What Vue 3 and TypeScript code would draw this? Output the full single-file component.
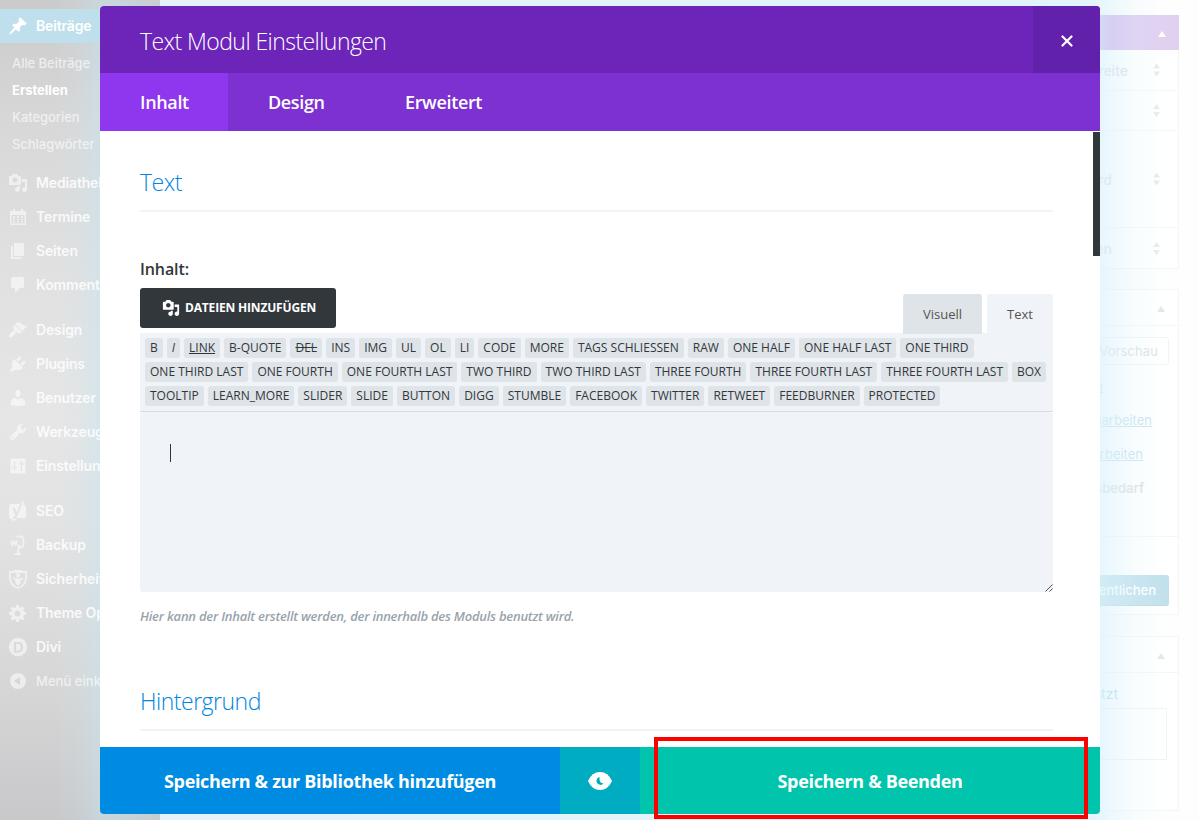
<script setup lang="ts">
interface MenuItem { icon: string; label: string; gap?: boolean; light?: boolean }

const submenu = ['Alle Beiträge', 'Erstellen', 'Kategorien', 'Schlagwörter']

const menu: MenuItem[] = [
  { icon: 'media', label: 'Mediathek' },
  { icon: 'calendar', label: 'Termine' },
  { icon: 'pages', label: 'Seiten' },
  { icon: 'comment', label: 'Kommentare' },
  { icon: 'brush', label: 'Design', gap: true },
  { icon: 'plug', label: 'Plugins' },
  { icon: 'user', label: 'Benutzer' },
  { icon: 'wrench', label: 'Werkzeuge' },
  { icon: 'sliders', label: 'Einstellungen' },
  { icon: 'yoast', label: 'SEO', gap: true },
  { icon: 'backup', label: 'Backup' },
  { icon: 'shield', label: 'Sicherheit' },
  { icon: 'gear', label: 'Theme Optionen' },
  { icon: 'divi', label: 'Divi' },
  { icon: 'collapse', label: 'Menü einklappen', light: true },
]

const tagRows: string[][] = [
  ['B', 'I', 'LINK', 'B-QUOTE', 'DEL', 'INS', 'IMG', 'UL', 'OL', 'LI', 'CODE', 'MORE', 'TAGS SCHLIESSEN', 'RAW', 'ONE HALF', 'ONE HALF LAST', 'ONE THIRD'],
  ['ONE THIRD LAST', 'ONE FOURTH', 'ONE FOURTH LAST', 'TWO THIRD', 'TWO THIRD LAST', 'THREE FOURTH', 'THREE FOURTH LAST', 'THREE FOURTH LAST', 'BOX'],
  ['TOOLTIP', 'LEARN_MORE', 'SLIDER', 'SLIDE', 'BUTTON', 'DIGG', 'STUMBLE', 'FACEBOOK', 'TWITTER', 'RETWEET', 'FEEDBURNER', 'PROTECTED'],
]

const tagClass = (t: string): string =>
  ({ I: 'italic', LINK: 'link', DEL: 'del' } as Record<string, string>)[t] ?? ''
</script>

<template>
  <div class="page">
    <aside class="sidebar">
      <div class="current">
        <svg class="ico" viewBox="0 0 20 20"><path d="M10.44 3.02l1.82-1.82 6.36 6.35-1.83 1.82c-1.05-.68-2.48-.57-3.41.36l-.75.75c-.92.93-1.04 2.35-.35 3.41l-1.83 1.82-2.41-2.41-2.8 2.79c-.42.42-3.38 2.71-3.8 2.29s1.86-3.39 2.28-3.81l2.79-2.79L4.1 9.36l1.83-1.82c1.05.69 2.48.57 3.4-.36l.75-.75c.93-.92 1.05-2.35.36-3.41z" /></svg>
        <span>Beiträge</span>
      </div>
      <ul class="sub">
        <li v-for="s in submenu" :key="s" :class="{ on: s === 'Erstellen' }">{{ s }}</li>
      </ul>
      <div v-for="m in menu" :key="m.label" class="item" :class="{ gap: m.gap, light: m.light }">
        <svg class="ico" viewBox="0 0 20 20">
          <path v-if="m.icon === 'media'" fill-rule="evenodd" d="M13 11V4c0-.55-.45-1-1-1h-1.67L9 1H5L3.670 3H2c-.55 0-1 .45-1 1v7c0 .55.45 1 1 1h10c.55 0 1-.45 1-1zM7 4.500c1.380 0 2.500 1.120 2.500 2.500S8.380 9.500 7 9.500 4.500 8.380 4.500 7 5.620 4.500 7 4.500zM14 6h5v10.500c0 1.380-1.120 2.500-2.500 2.500S14 17.880 14 16.500s1.120-2.500 2.500-2.500c.17 0 .34.020.500.050V9h-3V6zM10 14.050V13h2v3.500c0 1.380-1.120 2.500-2.500 2.500S7 17.880 7 16.500 8.120 14 9.500 14c.17 0 .34.020.500.050z" />
          <path v-else-if="m.icon === 'calendar'" fill-rule="evenodd" d="M2 4h3V2h2v2h6V2h2v2h3v14H2zM3.500 8v8.500h13V8zM5 9h2v2H5zm4 0h2v2H9zm4 0h2v2h-2zM5 11.700h2v1.600H5zm4 0h2v1.600H9zm4 0h2v1.600h-2zM5 14h2v1.600H5zm4 0h2v1.600H9zm4 0h2v1.600h-2z" />
          <path v-else-if="m.icon === 'pages'" d="M6 15V2h10v13H6zm-1 1h8v2H3V5h2v11z" />
          <path v-else-if="m.icon === 'comment'" d="M5 2h9q.820 0 1.410.59T16 4v7q0 .820-.590 1.410T14 13h-2l-5 5v-5H5q-.820 0-1.410-.590T3 11V4q0-.820.590-1.410T5 2z" />
          <path v-else-if="m.icon === 'brush'" d="M14.480 11.060L7.410 3.990l1.500-1.500c.5-.56 2.300-.470 3.510.320 1.210.8 1.430 1.280 2.910 2.100 1.180.640 2.450 1.260 4.450.850zM13.770 11.760L6.700 4.700 4.930 6.470c-.390.390-.390 1.020 0 1.410l1.060 1.060c.390.390.390 1.030 0 1.420-.6.600-1.430 1.110-2.210 1.690-.350.260-.7.530-1.010.840C1.430 14.230.4 16.080 1.400 17.070c.990 1 2.840-.030 4.180-1.360.310-.310.580-.660.850-1.020.570-.780 1.080-1.610 1.690-2.210.390-.390 1.020-.390 1.410 0l1.060 1.060c.390.390 1.020.390 1.410 0z" />
          <path v-else-if="m.icon === 'plug'" d="M13.110 4.360L9.870 7.600 8 5.730l3.240-3.240c.350-.340 1.050-.2 1.560.320.520.510.660 1.210.310 1.550zm-8 1.770l.910-1.120 9.010 9.010-1.190.840c-.710.710-2.630 1.160-3.820 1.160H6.140L4.900 17.260c-.590.590-1.540.590-2.120 0-.590-.580-.590-1.530 0-2.120L4 13.900v-3.880c0-1.180.4-3.180 1.110-3.890zm7.260 3.970l3.240-3.240c.340-.350 1.040-.210 1.550.310.520.510.660 1.210.310 1.550l-3.240 3.250z" />
          <path v-else-if="m.icon === 'user'" d="M10 9.250c-2.270 0-2.730-3.440-2.730-3.440C7 4.020 7.820 2 9.970 2c2.160 0 2.980 2.020 2.710 3.810 0 0-.410 3.440-2.680 3.440zm0 2.570L12.720 10c2.390 0 4.520 2.330 4.520 4.530v2.490s-3.650 1.130-7.240 1.130c-3.650 0-7.240-1.130-7.240-1.130v-2.490c0-2.250 1.940-4.480 4.470-4.480z" />
          <path v-else-if="m.icon === 'wrench'" d="M16.680 9.770c-1.340 1.340-3.300 1.670-4.950.990l-5.410 6.520c-.990.990-2.590.990-3.580 0s-.990-2.590 0-3.570l6.520-5.420c-.680-1.650-.350-3.610.990-4.950 1.280-1.280 3.120-1.620 4.720-1.060l-2.890 2.890 2.820 2.820 2.860-2.870c.530 1.580.180 3.390-1.080 4.650zM3.810 16.210c.4.390 1.040.390 1.430 0 .4-.4.400-1.040 0-1.430-.390-.4-1.030-.4-1.430 0-.390.390-.390 1.030 0 1.430z" />
          <path v-else-if="m.icon === 'sliders'" fill-rule="evenodd" d="M3.500 2.500h13q1 0 1 1v13q0 1-1 1h-13q-1 0-1-1v-13q0-1 1-1zM6 5v6H4.200v1.300H6V15h1.200v-2.700H9V11H7.200V5zm6.800 0v2.200H11v1.300h1.800V15H14V8.500h1.800V7.200H14V5z" />
          <path v-else-if="m.icon === 'yoast'" fill-rule="evenodd" d="M4 3h9l1.500-3h2L15 3.500q3 .2 3 3V17H9q-1.500 3-5 3v-2H4q-3 0-3-3V6q0-3 3-3zm.5 4l2.700 7q-.5 2.200-2.200 2.200V18c3 0 4-2 5-5l5-12h-2L9 11.500 7 7z" />
          <g v-else-if="m.icon === 'backup'" class="line"><path d="M3 5.500l1.200 4.500L6 6.500 7.800 10 9 5.500M9 2.500q0-1.200 2.500-1.200 4 0 4 3.500v4.500q0 3.200-3 3.200-2.500-.5-1.500-3M11 12.500L9.500 19M6.500 19.200H13" /></g>
          <path v-else-if="m.icon === 'shield'" fill-rule="evenodd" d="M1 2h5V1h8v1h5v6q0 9-9 12Q1 17 1 8zm1.700 2v4q0 7.500 7.300 10.200Q17.300 15.500 17.300 8V4zM10 4.500a2 2 0 0 1 0 4 2 2 0 0 1 0-4zM5 8.500l3 .7h4l3-.7v1.500l-2.500 1V14L10 17l-2.500-3v-3L5 10z" />
          <path v-else-if="m.icon === 'gear'" fill-rule="evenodd" d="M18 12h-2.180c-.170.700-.440 1.350-.810 1.930l1.540 1.540-2.100 2.100-1.540-1.540c-.580.360-1.230.630-1.910.790V19H8v-2.180c-.680-.160-1.330-.430-1.910-.790l-1.540 1.540-2.120-2.120 1.540-1.540c-.360-.580-.630-1.230-.790-1.910H1V9.030h2.170c.160-.7.440-1.350.8-1.940L2.430 5.550l2.100-2.100 1.540 1.540c.580-.370 1.240-.640 1.930-.810V2h3v2.180c.680.160 1.330.430 1.910.790l1.540-1.540 2.120 2.120-1.540 1.540c.360.590.640 1.240.8 1.940H18V12zm-8.500 1.500c1.660 0 3-1.340 3-3s-1.340-3-3-3-3 1.340-3 3 1.340 3 3 3z" />
          <path v-else-if="m.icon === 'divi'" fill-rule="evenodd" d="M10 .8a9.200 9.200 0 1 1 0 18.400A9.200 9.200 0 0 1 10 .8zM6 5v10.500h3.500q5.500 0 5.500-5.300T9.500 5zm2 1.800h1.500q3.400 0 3.400 3.400t-3.400 3.500H8z" />
          <path v-else fill-rule="evenodd" d="M10 2a8 8 0 1 1 0 16 8 8 0 0 1 0-16zm2 4l-6 4 6 4z" />
        </svg>
        <span>{{ m.label }}</span>
      </div>
    </aside>

    <div class="side">
      <section class="panel divi">
        <header class="violet"><i class="up"></i></header>
        <div class="row r1"><span>Breite</span><i class="sort"></i></div>
        <div class="row r2"><i class="sort"></i></div>
        <div class="row r3"><span>Standard</span><i class="sort"></i></div>
        <div class="row r4"><span>Aktivieren</span><i class="sort"></i></div>
      </section>
      <section class="panel publish">
        <header><i class="up"></i></header>
        <div class="publish-body">
          <div class="preview">Vorschau</div>
          <p class="e1"><u>Bearbeiten</u></p>
          <p class="e2"><u>Bearbeiten</u></p>
          <p class="e3"><u>Bearbeiten</u></p>
          <p class="e4"><b>Lesbarkeit: Verbesserungsbedarf</b></p>
        </div>
        <div class="submit"><div class="primary">Veröffentlichen</div></div>
      </section>
      <section class="panel used">
        <header><i class="up"></i></header>
        <p>benutzt</p>
        <div class="box"></div>
      </section>
    </div>
    <div class="haze"></div>

    <main class="modal">
      <header class="title">
        <h1>Text Modul Einstellungen</h1>
        <button class="close" aria-label="Schließen"><svg viewBox="0 0 12 12"><path d="M1.500 1.500l9 9m0-9l-9 9" /></svg></button>
      </header>
      <nav class="tabs"><a class="active">Inhalt</a><a class="t2">Design</a><a class="t3">Erweitert</a></nav>
      <div class="body">
        <h2>Text</h2>
        <label>Inhalt:</label>
        <div class="bar">
          <button class="add">
            <svg viewBox="0 0 20 20"><path fill-rule="evenodd" d="M13 11V4c0-.55-.45-1-1-1h-1.670L9 1H5L3.670 3H2c-.55 0-1 .45-1 1v7c0 .55.45 1 1 1h10c.55 0 1-.45 1-1zM7 4.500c1.380 0 2.500 1.120 2.500 2.500S8.380 9.500 7 9.500 4.500 8.380 4.500 7 5.620 4.500 7 4.500zM14 6h5v10.500c0 1.380-1.120 2.500-2.500 2.500S14 17.880 14 16.500s1.120-2.500 2.500-2.500c.17 0 .34.020.5.050V9h-3V6zM10 14.050V13h2v3.500c0 1.380-1.120 2.500-2.500 2.500S7 17.880 7 16.500 8.120 14 9.500 14c.17 0 .34.020.5.050z" /></svg>
            <span>DATEIEN HINZUFÜGEN</span>
          </button>
          <div class="modes"><span class="visual">Visuell</span><span class="text">Text</span></div>
        </div>
        <div class="tools">
          <div v-for="(row, i) in tagRows" :key="i" class="tagrow">
            <span v-for="(t, j) in row" :key="j" class="tag" :class="tagClass(t)">{{ t }}</span>
          </div>
        </div>
        <div class="area">
          <i class="caret"></i>
          <svg class="grip" viewBox="0 0 8 8"><path d="M.5 7.500l7-7M4.500 7.500l3-3" /></svg>
        </div>
        <p class="hint">Hier kann der Inhalt erstellt werden, der innerhalb des Moduls benutzt wird.</p>
        <h2 class="second">Hintergrund</h2>
        <div class="scroll"></div>
      </div>
      <footer>
        <button class="lib"><span>Speichern &amp; zur Bibliothek hinzufügen</span></button>
        <button class="eye" aria-label="Vorschau"><svg viewBox="0 0 24 18"><path d="M0 9Q4 0 12 0T24 9Q20 18 12 18T0 9z" fill="#fff" /><path d="M11.500 5A4 4 0 1 0 15.500 11.500Q11 11.500 11.500 5z" fill="#00acc1" /></svg></button>
        <button class="save"><span>Speichern &amp; Beenden</span></button>
      </footer>
    </main>
    <div class="marker"></div>
  </div>
</template>

<style>
html, body { margin: 0; overflow: hidden; }
</style>

<style scoped>
* { box-sizing: border-box; }
button { border: 0; margin: 0; padding: 0; font: inherit; letter-spacing: inherit; color: inherit; background: none; }
.page { position: relative; width: 1198px; height: 820px; overflow: hidden; display: flex; justify-content: space-between; background: #fdfdfd; font-family: Inter, sans-serif; }
.sidebar { width: 160px; height: 820px; padding-top: 9px; color: rgba(255, 255, 255, .86); font-size: 14px; font-weight: 600; white-space: nowrap;
  background: linear-gradient(90deg, rgba(205, 228, 234, 0) 34%, rgba(205, 228, 234, .2) 50%, rgba(196, 230, 239, .5) 64%, rgba(194, 214, 220, .3) 100%), linear-gradient(180deg, #cbcbcc 0, #d8d8d9 130px, #e0e0e1 260px, #e6e6e7 420px, #e2e2e3 540px, #d6d6d7 690px, #c8c8ca 820px); }
.ico { width: 20px; height: 20px; flex: none; fill: rgba(255, 255, 255, .56); }
.ico .line { fill: none; stroke: rgba(255, 255, 255, .56); stroke-width: 1.7; }
.current, .item { display: flex; align-items: center; gap: 8px; height: 34px; padding-left: 8px; letter-spacing: -.15px; }
.current span, .item span { padding-bottom: 2px; }
.current { background: #bfdfec; color: #fff; }
.current .ico { fill: #fff; }
.sub { list-style: none; margin: 0; padding: 7px 0 9px 12px; height: 123px; font-size: 13px; font-weight: 500; letter-spacing: -.05px; color: rgba(255, 255, 255, .64); }
.sub li { height: 27px; line-height: 27px; }
.sub .on { font-weight: 700; color: #fff; letter-spacing: 0; }
.gap { margin-top: 11px; }
.light { font-weight: 500; font-size: 13px; letter-spacing: .05px; color: rgba(255, 255, 255, .65); }
.item.light span { padding-bottom: 0; }

.side { width: 279px; margin: 15px 19px 0 0; font-size: 13px; color: #ced0d2; }
.panel { border: 1px solid #f1f1f2; background: #fff; }
.panel header { height: 36px; border-bottom: 1px solid #f1f2f3; display: flex; justify-content: flex-end; align-items: center; padding: 3px 13px 0 0; }
.panel .violet { height: 35px; background: linear-gradient(90deg, #b46ee0 200px, #cbaee8 235px, #d1bce8 279px); margin: -1px -1px 0; border: 0; }
.up { border: 4px solid transparent; border-top: 0; border-bottom: 6px solid #d9d9da; }
.violet .up { border-bottom-color: #fff; }
.divi { height: 254px; font-size: 14px; font-weight: 500; }
.row { display: flex; align-items: center; justify-content: flex-end; border-bottom: 1px solid #f2f3f4; padding-right: 18px; height: 41px; }
.row span { margin-right: 25px; }
.r2 { height: 40px; }
.r3 { height: 97px; }
.r3 span { margin-right: 41px; }
.r4 span { margin-right: 41px; }
.r4 { border: 0; }
.sort { width: 7px; height: 13px; background: #dcdddf; clip-path: polygon(50% 0, 100% 38%, 0 38%, 0 62%, 100% 62%, 50% 100%, 0 62%, 0 38%); }
.publish { margin-top: 20px; height: 326px; }
.publish-body { height: 211px; padding: 11px 9px 0 0; border-bottom: 1px solid #f1f2f3; }
.preview { height: 28px; margin-left: 170px; border: 1px solid #ececed; border-radius: 3px; text-align: right; padding-right: 10px; line-height: 26px; letter-spacing: .1px; }
.publish p { margin: 0; height: 34px; line-height: 34px; text-align: right; color: #a9d2e4; }
.publish .e1 { margin-top: 4px; padding-right: 66px; }
.publish .e2 { padding-right: 17px; }
.publish .e3 { padding-right: 26px; }
.publish .e4 { padding-right: 25px; color: #ced0d2; white-space: nowrap; }
.e4 b { font-weight: 600; }
.submit { padding: 38px 9px 0 0; display: flex; justify-content: flex-end; }
.primary { width: 160px; height: 31px; background: #a0d0e2; border-bottom: 1px solid #96c4d6; border-radius: 3px; color: #fff; font-weight: 500; line-height: 30px; text-align: right; padding-right: 13px; }
.used { margin-top: 21px; height: 175px; }
.used p { margin: 11px 60px 0 0; text-align: right; line-height: 20px; color: #8cc8e6; font-size: 14px; }
.box { margin: 4px 11px 0 20px; height: 52px; border: 1px solid #e8ebed; }
.haze { position: absolute; left: 160px; right: 0; top: 0; bottom: 0; background: linear-gradient(90deg, #e4f3f9 0, #e1f4fb 840px, rgba(222, 243, 251, .84) 935px, rgba(229, 246, 252, .66) 953px, rgba(242, 251, 253, .5) 975px, rgba(255, 255, 255, .36) 1005px, rgba(255, 255, 255, .24) 100%); }

.modal { position: absolute; left: 100px; top: 6px; width: 1000px; height: 808px; display: flex; flex-direction: column; border-radius: 4px; overflow: hidden; background: #fff; color: #32373c; font-family: "Open Sans", sans-serif; }
.title { height: 67px; flex: none; display: flex; justify-content: space-between; align-items: center; background: #6c24b9; color: #fff; padding-left: 40px; }
h1 { margin: 2px 0 0; font-size: 23px; font-weight: 350; letter-spacing: -.56px; }
.close { width: 67px; height: 67px; background: #6121aa; display: grid; place-items: center; }
.close svg { width: 12px; height: 12px; margin-top: 2px; fill: none; stroke: #fff; stroke-width: 2.2; stroke-linecap: round; }
.tabs { height: 58px; flex: none; display: flex; background: #7e31d1; color: #fff; font-size: 18px; font-weight: 600; line-height: 58px; letter-spacing: -.35px; }
.tabs a { padding: 0 40px; }
.tabs .active { width: 128px; background: #8f37ef; }
.tabs .t2 { width: 137px; }
.body { position: relative; height: 616px; padding: 0 47px 0 40px; }
h2 { margin: 0; height: 81px; padding-top: 35px; border-bottom: 2px solid #f0f3f8; font-size: 23px; line-height: 32px; font-weight: 350; letter-spacing: -.5px; color: #0085e0; }
label { display: block; margin-top: 46px; height: 30px; line-height: 22px; font-size: 16px; font-weight: 600; letter-spacing: -.1px; }
.bar { height: 45px; display: flex; justify-content: space-between; }
.add { width: 196px; height: 40px; background: #32373c; border-radius: 3px; color: #fff; display: flex; align-items: center; padding-left: 22px; font-size: 12px; font-weight: 700; letter-spacing: -.17px; white-space: nowrap; }
.add svg { width: 18px; height: 18px; fill: #fff; margin-right: 5px; }
.add span { padding-bottom: 2px; }
.modes { display: flex; gap: 5px; padding-top: 6px; font-size: 13px; font-weight: 500; text-align: center; line-height: 40px; color: #555; }
.modes span { border-radius: 3px 3px 0 0; background: #dfe4e8; width: 79px; height: 40px; position: relative; }
.modes .text { background: #f0f3f8; width: 66px; }
.tools { height: 79px; background: #f0f3f8; border-bottom: 1px solid #d9dce0; padding: 5px; display: flex; flex-direction: column; gap: 4px; }
.tagrow { display: flex; gap: 4px; }
.tag { height: 20px; border-radius: 3px; background: #dfe4e8; padding: 0 5px; font-size: 12px; letter-spacing: .009px; line-height: 20px; white-space: nowrap; }
.italic { font-style: italic; }
.link { text-decoration: underline; }
.del { text-decoration: line-through; }
.area { height: 180px; background: #f0f3f8; border-radius: 3px; display: flex; justify-content: space-between; }
.caret { width: 1px; height: 18px; margin: 32px 0 0 30px; background: #32373c; }
.grip { width: 8px; height: 8px; align-self: flex-end; fill: none; stroke: #555; stroke-width: 1; }
.hint { margin: 14px 0 0; font-size: 13px; line-height: 20px; font-style: italic; font-weight: 600; color: #98a3ac; letter-spacing: -.23px; }
h2.second { margin-top: 24px; }
.scroll { position: absolute; right: 0; top: 1px; width: 7px; height: 124px; background: #32373c; }
footer { height: 67px; display: flex; flex: none; color: #fff; font-size: 18px; font-weight: 700; letter-spacing: -.32px; text-align: center; }
.lib { width: 460px; background: #008be3; }
.eye { width: 80px; background: #00acc1; display: grid; place-items: center; }
.eye svg { width: 24px; height: 18px; }
.save { width: 460px; background: #00c4ac; }
.marker { position: absolute; left: 654px; top: 737px; width: 434px; height: 82px; border: 4px solid #f00; }
</style>
